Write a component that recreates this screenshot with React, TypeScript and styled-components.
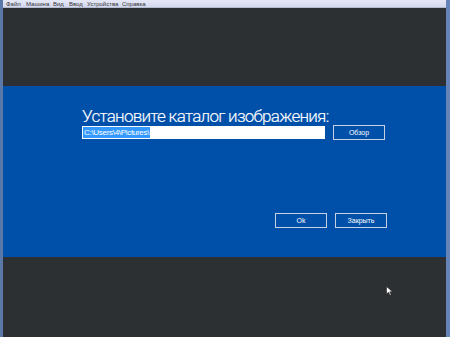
import React from "react";
import styled, { createGlobalStyle } from "styled-components";

const Global = createGlobalStyle`
  html, body { margin: 0; padding: 0; background: #2c3033; }
  body { width: 450px; height: 337px; overflow: hidden; font-family: "Liberation Sans", Arial, sans-serif; }
  #root { width: 450px; height: 337px; }
`;

const Frame = styled.div`
  position: relative;
  width: 450px;
  height: 337px;
  box-sizing: border-box;
  display: flex;
  flex-direction: column;
  border-left: 3px solid #5a78a8;
  border-right: 4px solid #6784b8;
  background: #2c3033;
  overflow: hidden;
`;

const MenuBar = styled.div`
  height: 7px;
  display: flex;
  align-items: flex-end;
  padding-left: 3px;
  background: linear-gradient(#e6e8f6, #d4d8ee);
  border-bottom: 1px solid #b6bccf;
  overflow: hidden;
`;

const MenuItem = styled.span<{ $w: number }>`
  flex: 0 0 ${(p) => p.$w}px;
  font-size: 6px;
  line-height: 6px;
  color: #333;
  white-space: nowrap;
  overflow: hidden;
`;

const Dark = styled.div<{ $h?: number }>`
  background: #2c3033;
  ${(p) => (p.$h ? `height: ${p.$h}px;` : "flex: 1;")}
`;

const Band = styled.div`
  height: 171px;
  background: #0050aa;
  box-sizing: border-box;
  padding: 21px 0 0 79px;
  display: flex;
  flex-direction: column;
`;

const Title = styled.div`
  font-family: Roboto, "Open Sans", sans-serif;
  font-weight: 300;
  font-size: 17px;
  line-height: 19px;
  margin-bottom: -1px;
  color: #ffffff;
  white-space: nowrap;
  letter-spacing: -0.72px;
  -webkit-text-stroke: 0.15px #ffffff;
`;

const Row = styled.div<{ $mt?: number; $pl?: number }>`
  display: flex;
  align-items: center;
  gap: 8px;
  margin-top: ${(p) => p.$mt ?? 0}px;
  padding-left: ${(p) => p.$pl ?? 0}px;
`;

const Input = styled.div`
  width: 243px;
  height: 13px;
  background: #ffffff;
  box-sizing: border-box;
  padding: 1px 1px;
  display: flex;
  align-items: center;
`;

const Selected = styled.span`
  background: #3399ff;
  color: #ffffff;
  font-family: "Liberation Sans", Arial, sans-serif;
  font-size: 8px;
  line-height: 11px;
  padding: 0 1px;
  letter-spacing: -0.3px;
`;

const Button = styled.div`
  width: 52px;
  height: 15px;
  box-sizing: border-box;
  border: 1px solid #c8d0e4;
  color: #ffffff;
  font-size: 7px;
  display: flex;
  align-items: center;
  justify-content: center;
`;

const Cursor = styled.svg`
  position: absolute;
  left: 383px;
  top: 286px;
`;

export default function App() {
  const menu: [string, number][] = [
    ["Файл", 20],
    ["Машина", 27],
    ["Вид", 16],
    ["Ввод", 18],
    ["Устройства", 35],
    ["Справка", 24],
  ];
  return (
    <>
      <Global />
      <Frame>
        <MenuBar>
          {menu.map(([t, w]) => (
            <MenuItem key={t} $w={w}>
              {t}
            </MenuItem>
          ))}
        </MenuBar>
        <Dark $h={78} />
        <Band>
          <Title>Установите каталог изображения:</Title>
          <Row>
            <Input>
              <Selected>C:\Users\4\Pictures\</Selected>
            </Input>
            <Button>Обзор</Button>
          </Row>
          <Row $mt={73} $pl={193}>
            <Button>Ok</Button>
            <Button>Закрыть</Button>
          </Row>
        </Band>
        <Dark />
        <Cursor width="8" height="10" viewBox="0 0 8 10">
          <path d="M0.5 0.5 L0.5 8 L2.5 6.2 L4 9.3 L5.2 8.8 L3.8 5.8 L6.5 5.8 Z" fill="#ffffff" stroke="#222" strokeWidth="0.6" />
        </Cursor>
      </Frame>
    </>
  );
}
